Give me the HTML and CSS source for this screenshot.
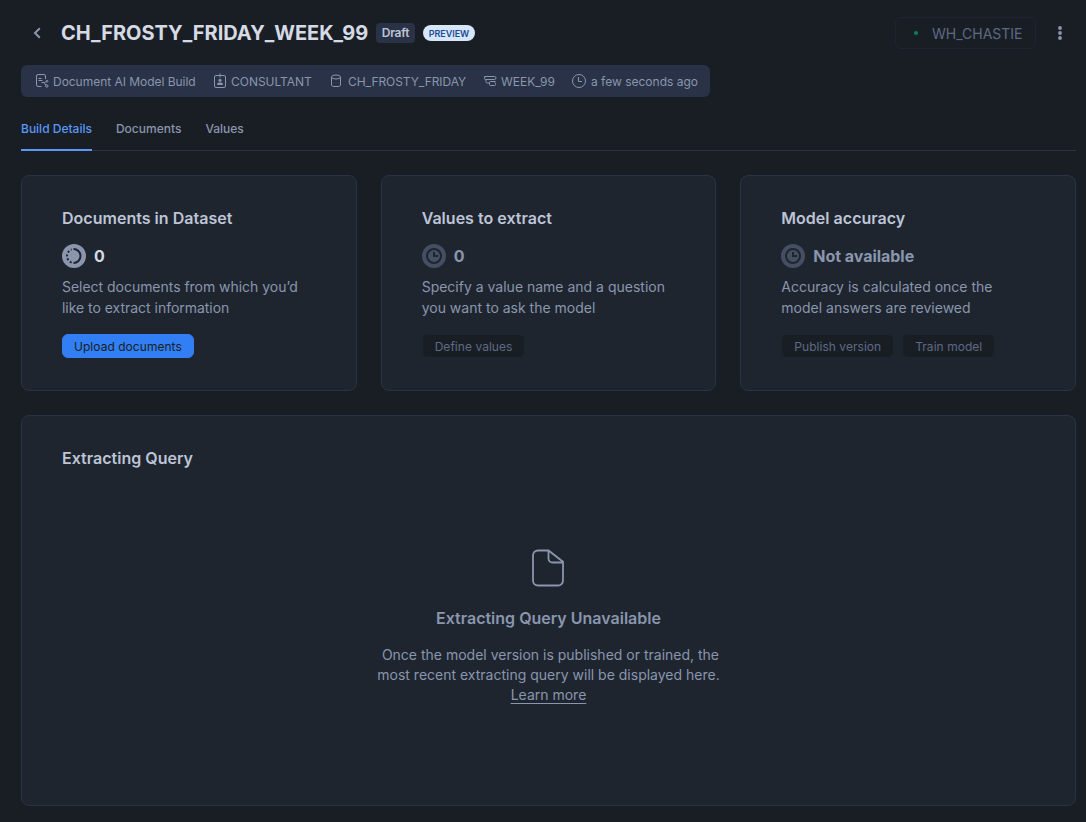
FILE: index.html
```html
<!DOCTYPE html>
<html lang="en">
<head>
<meta charset="utf-8">
<title>CH_FROSTY_FRIDAY_WEEK_99</title>
<link rel="stylesheet" href="styles.css">
</head>
<body>
<div class="page">
  <header class="header">
    <svg class="back" width="16" height="16" viewBox="0 0 16 16"><path d="M10.800 3.300 6 8l4.800 4.700"/></svg>
    <h1 class="title">CH_FROSTY_FRIDAY_WEEK_99</h1>
    <span class="tag">Draft</span>
    <span class="pill">PREVIEW</span>
    <div class="warehouse"><i class="dot"></i><span>WH_CHASTIE</span></div>
    <svg class="kebab" width="16" height="16" viewBox="0 0 16 16"><circle cx="8" cy="3" r="1.900"/><circle cx="8" cy="8" r="1.900"/><circle cx="8" cy="13" r="1.900"/></svg>
  </header>

  <div class="meta">
    <span class="meta-item build"><svg class="icon" width="14" height="16" viewBox="0 0 14 16"><path d="M6.500 13.500H3a1.500 1.500 0 0 1-1.500-1.500V3A1.500 1.500 0 0 1 3 1.500h6A1.500 1.500 0 0 1 10.500 3v3M3.500 5.500h3M3.500 7.500h4M6.500 9.500h3l1.700-1M9 9.500l2 2.800"/><circle cx="12" cy="8.300" r=".9"/><circle cx="11.800" cy="13" r="1.200"/></svg><span>Document AI Model Build</span></span>
    <span class="meta-item role"><svg class="icon" width="14" height="16" viewBox="0 0 14 16"><rect x="1.500" y="2.500" width="11" height="12" rx="1.500"/><path d="M7 .5v4"/><circle class="solid" cx="7" cy="7.200" r="1.500"/><path class="solid" d="M4.200 12v-1q0-1.500 1.500-1.500h2.600q1.500 0 1.500 1.500v1z"/></svg><span>CONSULTANT</span></span>
    <span class="meta-item database"><svg class="icon" width="12" height="16" viewBox="0 0 12 16"><ellipse cx="6" cy="4" rx="4.500" ry="2"/><path d="M1.500 4v8c0 1 1.500 1.500 2.500 1.500h4c1 0 2.500-.5 2.500-1.500V4"/></svg><span>CH_FROSTY_FRIDAY</span></span>
    <span class="meta-item schema"><svg class="icon" width="14" height="16" viewBox="0 0 14 16"><path d="M1.500 3.500h10a1 1 0 0 1 0 3h-9a1 1 0 0 1-1-1zM12.500 8.500H7.500a1 1 0 0 0-1 1v2a1 1 0 0 0 1 1h4a1 1 0 0 0 1-1v-1a1 1 0 0 0-1-1M3 6.500v2a1.500 1.500 0 0 0 1.500 1.500h2"/></svg><span>WEEK_99</span></span>
    <span class="meta-item time"><svg class="icon" width="16" height="16" viewBox="0 0 16 16"><circle cx="8" cy="8" r="6.500"/><path d="M7.500 4v4.500H11"/></svg><span>a few seconds ago</span></span>
  </div>

  <nav class="tabs">
    <a class="tab active">Build Details</a>
    <a class="tab">Documents</a>
    <a class="tab">Values</a>
  </nav>

  <main>
    <div class="cards">
      <section class="card">
        <h2>Documents in Dataset</h2>
        <div class="status current"><svg width="24" height="24" viewBox="0 0 24 24"><circle class="disc" cx="12" cy="12" r="12"/><path class="mark" d="M11.500 5a7 7 0 0 1 0 14"/><path class="mark dashes" d="M9.600 18.570A7 7 0 0 1 9.600 5.430"/></svg><b>0</b></div>
        <p class="tight">Select documents from which you’d<br>like to extract information</p>
        <div class="actions"><button class="button primary">Upload documents</button></div>
      </section>
      <section class="card">
        <h2>Values to extract</h2>
        <div class="status"><svg width="24" height="24" viewBox="0 0 24 24"><circle class="disc" cx="12" cy="12" r="12"/><circle class="mark" cx="12" cy="12" r="7"/><path class="mark" d="M12 8v4h4"/></svg><b>0</b></div>
        <p>Specify a value name and a question<br>you want to ask the model</p>
        <div class="actions"><button class="button">Define values</button></div>
      </section>
      <section class="card">
        <h2>Model accuracy</h2>
        <div class="status"><svg width="24" height="24" viewBox="0 0 24 24"><circle class="disc" cx="12" cy="12" r="12"/><circle class="mark" cx="12" cy="12" r="7"/><path class="mark" d="M12 8v4h4"/></svg><b>Not available</b></div>
        <p>Accuracy is calculated once the<br>model answers are reviewed</p>
        <div class="actions"><button class="button">Publish version</button><button class="button">Train model</button></div>
      </section>
    </div>

    <section class="card query">
      <h2>Extracting Query</h2>
      <div class="empty">
        <svg class="file" width="32" height="38" viewBox="0 0 32 38"><path d="M6 1.500h10.500L31 12.800V31.500a5 5 0 0 1-5 5H6a5 5 0 0 1-5-5V6.500a5 5 0 0 1 5-5zM16.500 1.500v8a4 4 0 0 0 4 4H31"/></svg>
        <h3>Extracting Query Unavailable</h3>
        <p>&nbsp;Once the model version is published or trained, the<br>most recent extracting query will be displayed here.<br><a class="learn">Learn more</a></p>
      </div>
    </section>
  </main>
</div>
</body>
</html>
```
FILE: styles.css
```css
* { box-sizing: border-box; }
body { margin: 0; background: #191e24; color: #8a96ad; font-family: Inter, "Liberation Sans", sans-serif; }
h1, h2, h3, p { margin: 0; }
.page { height: 822px; padding: 17px 10px 16px 21px; display: flex; flex-direction: column; }
.header { height: 32px; display: flex; align-items: center; }
.back { margin-left: 8px; fill: none; stroke: #8a96ad; stroke-width: 2; }
.title { margin-left: 16px; width: 315px; font-size: 20px; line-height: 28px; font-weight: 700; letter-spacing: -.02px; color: #d5dae4; white-space: nowrap; }
.tag { width: 39px; height: 20px; border-radius: 4px; background: #293246; color: #bdc4d5; font-size: 12px; line-height: 20px; font-weight: 600; letter-spacing: -.25px; text-align: center; }
.pill { margin-left: 8px; width: 52px; height: 16px; border-radius: 8px; background: #d6e6ff; color: #1f4a91; font-size: 9px; line-height: 17px; font-weight: 600; letter-spacing: -.05px; text-align: center; }
.warehouse { margin-left: auto; width: 141px; height: 32px; padding-left: 18px; border: 1px solid #1f252f; border-radius: 6px; display: flex; align-items: center; font-size: 14px; color: #5d6a85; }
.warehouse span { padding-top: 1px; }
.dot { width: 4px; height: 4px; margin-right: 14px; border-radius: 50%; background: #0c8159; }
.kebab { margin: 0 8px 0 16px; fill: #8a96ad; }

.meta { margin-top: 16px; width: 689px; height: 32px; flex: none; padding-left: 14px; border-radius: 6px; background: #293246; display: flex; align-items: center; font-size: 12px; }
.meta-item { display: flex; align-items: center; flex: none; gap: 4px; white-space: nowrap; letter-spacing: -.03px; }
.meta-item span { padding-top: 1px; }
.build { width: 178px; }
.role { width: 117px; }
.database { width: 153px; gap: 6px; letter-spacing: -.06px; }
.schema { width: 88px; }
.time { letter-spacing: 0; }
.icon { fill: none; stroke: #8a96ad; stroke-width: 1; }
.solid { fill: #8a96ad; stroke: none; }

.tabs { height: 54px; flex: none; display: flex; gap: 24px; border-bottom: 1px solid #293246; font-size: 12px; font-weight: 500; }
.tab { height: 54px; padding-top: 22px; line-height: 20px; border-bottom: 2px solid transparent; }
.tab.active { color: #5999f8; border-color: #5999f8; }

.cards { margin-top: 24px; display: grid; grid-template-columns: repeat(3, 1fr); gap: 24px; }
.card { height: 216px; padding: 32px 40px; border: 1px solid #293246; border-radius: 8px; background: #1e252f; }
.card h2 { font-size: 16px; line-height: 20px; font-weight: 600; color: #bdc4d5; letter-spacing: .02px; }
.card p { font-size: 14px; line-height: 21px; white-space: nowrap; }
.card .tight { letter-spacing: -.03px; }
.status { height: 24px; margin: 16px 0 8px; display: flex; gap: 8px; align-items: center; font-size: 16px; }
.status b { font-weight: 700; letter-spacing: -.04px; }
.disc { fill: #454f63; }
.current .disc { fill: #8a96ad; }
.current b { color: #d5dae4; }
.mark { fill: none; stroke: #1e252f; stroke-width: 2; }
.dashes { stroke-dasharray: 2 2; }
.actions { margin-top: 16px; display: flex; gap: 8px; }
.button { height: 24px; padding: 1px 12px 0; border: 1px solid #1e252f; border-radius: 6px; background: #191e24; color: #5d6a85; font: 400 12px/22px Inter, "Liberation Sans", sans-serif; letter-spacing: .04px; }
.primary { padding: 1px 11px 0; background: #327ef4; border-color: #327ef4; color: #191e24; }

.query { margin-top: 24px; height: 391px; }
.empty { margin-top: 81px; display: flex; flex-direction: column; align-items: center; text-align: center; }
.file { margin-right: 1px; fill: none; stroke: #8a96ad; stroke-width: 1.800; }
.empty h3 { margin-top: 21px; font-size: 16px; line-height: 20px; font-weight: 600; }
.empty p { margin-top: 17px; line-height: 20px; }
.learn { text-decoration: underline; text-underline-offset: 3px; }
```
